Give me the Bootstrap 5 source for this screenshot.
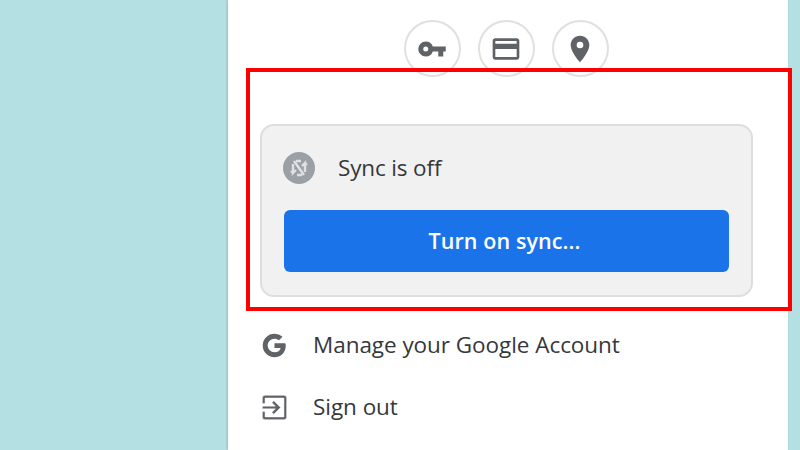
<!DOCTYPE html>
<html lang="en">
<head>
<meta charset="utf-8">
<title>Sync is off</title>
<link href="https://cdn.jsdelivr.net/npm/bootstrap@5.3.0/dist/css/bootstrap.min.css" rel="stylesheet">
<style>
html,body{height:450px;overflow:hidden}
body{background:#b5e0e3;font-family:"Open Sans","Noto Sans","Liberation Sans",sans-serif;color:#3c4043}
.stage{width:800px;height:450px;position:relative;padding-left:228px}
.sheet{width:560px;height:450px;background:#fff;box-shadow:-1px 0 2px rgba(0,0,0,.18);padding-top:20px}
.quick{gap:17px;padding-right:4px;height:57px}
.quick-btn{width:57px;height:57px;border:2px solid #e0e0e0;border-radius:50%;background:#fff}
.sync-wrap{margin:47px 35px 0 32px;height:173px;background:#f1f1f1;border:2px solid #dedede;border-radius:14px;padding:0 22px}
.sync-top{height:84px;gap:23px}
.sync-ico{width:32px;height:32px;border-radius:50%;background:#9aa0a6;margin-left:-1px}
.sync-txt{font-size:22.5px;color:#35383b;letter-spacing:-.15px}
.sync-btn{height:62px;width:445px;padding:0 16px 0 12px;background:#1a73e8;border:0;border-radius:6px;color:#fff;font-size:21.5px;font-weight:600;letter-spacing:.1px}
.sync-btn:hover{background:#1a73e8;color:#fff}
.acct-list{margin-top:17px;padding-left:33px}
.acct-row{height:62px;gap:25px;font-size:22.5px;color:#35383b;letter-spacing:-.05px}
.acct-ico{width:27px;height:27px;flex:none}
.acct-thin{stroke:#fff;stroke-width:.35}
.mark-box{position:absolute;left:246px;top:68px;width:546px;height:243px;border:4px solid #f00;pointer-events:none}
</style>
</head>
<body>
<div class="stage">
  <div class="sheet">
    <div class="quick d-flex justify-content-center">
      <div class="quick-btn d-flex align-items-center justify-content-center">
        <svg width="30" height="30" viewBox="0 0 24 24" fill="#5f6368"><path d="M12.65 10A6 6 0 0 0 7 6a6 6 0 0 0 0 12 6 6 0 0 0 5.65-4H17v4h4v-4h2v-4H12.65zM7 14a2 2 0 1 1 0-4 2 2 0 0 1 0 4z"/></svg>
      </div>
      <div class="quick-btn d-flex align-items-center justify-content-center">
        <svg width="32" height="32" viewBox="0 0 24 24" fill="#5f6368"><path d="M20 4H4c-1.11 0-2 .89-2 2v12c0 1.11.89 2 2 2h16c1.11 0 2-.89 2-2V6c0-1.11-.89-2-2-2zm0 14H4v-6h16v6zm0-10H4V6h16v2z"/></svg>
      </div>
      <div class="quick-btn d-flex align-items-center justify-content-center">
        <svg width="32" height="32" viewBox="0 0 24 24" fill="#5f6368"><path d="M12 2C8.13 2 5 5.13 5 9c0 5.25 7 13 7 13s7-7.75 7-13c0-3.87-3.13-7-7-7zm0 9.5a2.5 2.5 0 1 1 0-5 2.5 2.5 0 0 1 0 5z"/></svg>
      </div>
    </div>
    <div class="sync-wrap">
      <div class="sync-top d-flex align-items-center">
        <div class="sync-ico d-flex align-items-center justify-content-center">
          <svg width="24" height="24" viewBox="0 0 24 24" fill="none" stroke="#dfe1e5" stroke-width="2.4"><path d="M6 8v9l3-3M6 17l-2-2"/><path d="M18 16V7l-3 3M18 7l2 2"/><path d="M9 5h5M10 19h5M7 5l10 14"/></svg>
        </div>
        <span class="sync-txt">Sync is off</span>
      </div>
      <button type="button" class="btn sync-btn">Turn on sync...</button>
    </div>
    <div class="acct-list">
      <div class="acct-row d-flex align-items-center">
        <svg class="acct-ico" viewBox="0 0 24 24" fill="#5f6368"><path d="M21.6 10H12v4.2h5.5c-.5 2.5-2.6 3.9-5.5 3.9a6.1 6.1 0 0 1 0-12.2c1.5 0 2.9.5 4 1.4l3.1-3.1A10.3 10.3 0 0 0 12 1.5a10.5 10.5 0 0 0 0 21c5.3 0 10-3.8 10-10.5 0-.7-.2-1.4-.4-2z"/></svg>
        <span>Manage your Google Account</span>
      </div>
      <div class="acct-row d-flex align-items-center">
        <svg class="acct-ico acct-thin" viewBox="2 2 20 20" fill="#5f6368"><path d="M10.09 15.59 11.5 17l5-5-5-5-1.41 1.41L12.67 11H3v2h9.67l-2.58 2.59zM19 3H5a2 2 0 0 0-2 2v4h2V5h14v14H5v-4H3v4a2 2 0 0 0 2 2h14a2 2 0 0 0 2-2V5a2 2 0 0 0-2-2z"/></svg>
        <span>Sign out</span>
      </div>
    </div>
  </div>
  <div class="mark-box"></div>
</div>
<script src="https://cdn.jsdelivr.net/npm/bootstrap@5.3.0/dist/js/bootstrap.bundle.min.js"></script>
</body>
</html>
